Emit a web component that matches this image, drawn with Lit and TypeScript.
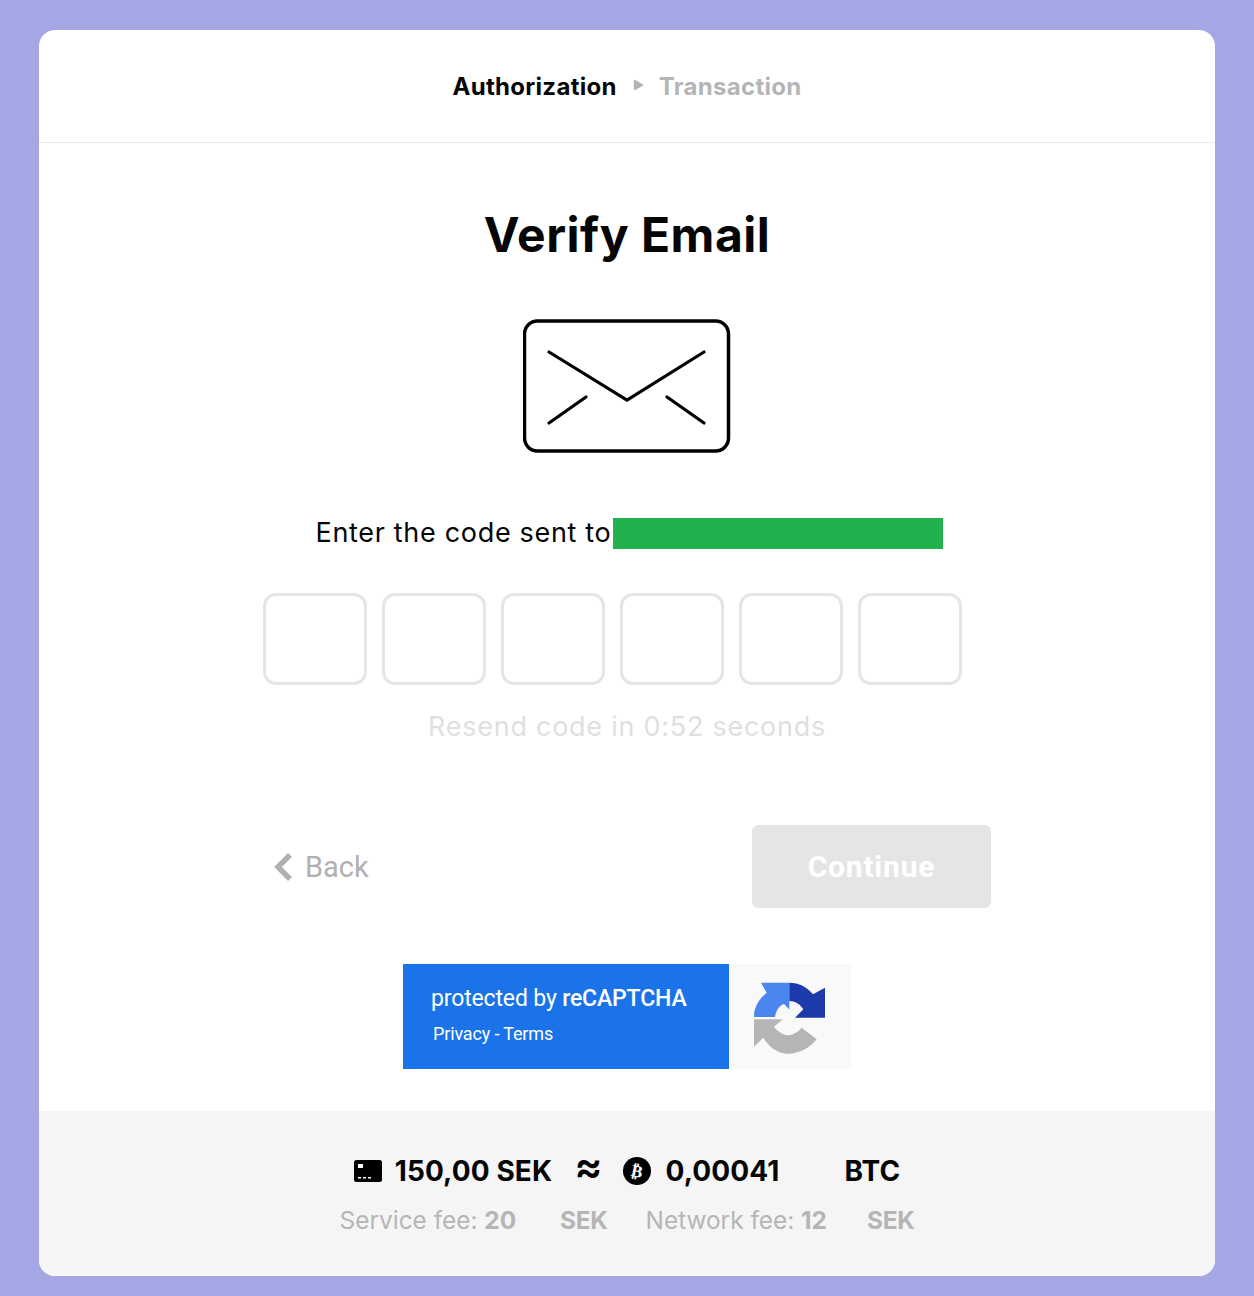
import { LitElement, html, css } from "lit";
import { customElement } from "lit/decorators.js";

@customElement("app-root")
export class AppRoot extends LitElement {
  static styles = css`
    :host { display: block; }
    .page { background: #a5a7e5; padding: 30px 39px 20px; height: 1296px; box-sizing: border-box; font-family: Inter, "Liberation Sans", sans-serif; color: #050505; }
    .card { background: #fff; border-radius: 16px; height: 1246px; display: flex; flex-direction: column; overflow: hidden; }
    .steps { height: 112px; border-bottom: 1px solid #ececec; display: flex; align-items: center; justify-content: center; font-weight: 700; font-size: 24px; letter-spacing: 0.3px; flex: none; }
    .steps .t { color: #b5b5b7; }
    .steps svg { margin: 0 15px 2px 16px; }
    .main { flex: 1; display: flex; flex-direction: column; align-items: center; }
    h1 { margin: 63px 0 0; font-size: 48px; line-height: 58px; font-weight: 700; letter-spacing: 0.5px; }
    .env { margin-top: 55px; display: block; }
    .sent { margin: 65px 0 0 5px; display: flex; align-items: center; height: 31px; font-size: 27px; letter-spacing: 0.68px; }
    .sent span { margin-bottom: 2px; }
    .sent i { display: block; width: 330px; height: 31px; background: #22b14c; margin-left: 2px; }
    .codes { margin: 44px 30px 0 0; display: flex; gap: 15px; }
    .codes div { width: 104px; height: 92px; box-sizing: border-box; border: 3px solid #e5e5e7; border-radius: 13px; }
    .resend { margin-top: 26px; font-size: 27px; line-height: 32px; letter-spacing: 0.74px; color: #dfdfe1; }
    .actions { margin-top: 82px; width: 728px; display: flex; justify-content: space-between; align-items: center; height: 83px; }
    .back { display: flex; align-items: center; gap: 12px; font-family: Roboto, sans-serif; font-size: 29px; color: #b0b0b2; margin-left: 11px; }
    .back svg { display: block; }
    .continue { width: 239px; height: 83px; background: #e5e5e5; border-radius: 6px; color: #fff; font-family: Roboto, sans-serif; font-weight: 700; font-size: 30px; letter-spacing: 0.8px; display: flex; align-items: center; justify-content: center; }
    .rc { margin-top: 56px; width: 448px; height: 105px; display: flex; font-family: Roboto, sans-serif; flex: none; }
    .rc .blue { width: 326px; background: #1a73e8; color: #fff; box-sizing: border-box; padding: 21px 0 0 28px; }
    .rc .l1 { font-size: 23px; line-height: 28px; letter-spacing: -0.15px; }
    .rc .l1 b { font-weight: 500; }
    .rc .l2 { font-size: 18px; line-height: 22px; margin: 10px 0 0 2px; letter-spacing: -0.15px; }
    .rc .logo { flex: 1; background: #f9f9f9; display: flex; align-items: center; justify-content: center; }
    .foot { height: 165px; flex: none; background: #f5f5f5; display: flex; flex-direction: column; align-items: center; }
    .sum { margin-top: 42px; height: 36px; display: flex; align-items: center; font-size: 28px; font-weight: 700; letter-spacing: 0.1px; }
    .sum .card-ic { margin-right: 13px; }
    .sum .x { font-size: 42px; line-height: 36px; margin: -10px 20px 0 22px; font-weight: 600; }
    .sum .v { margin: 0 65px 0 15px; }
    .sum svg { display: block; }
    .fee { margin-top: 16px; display: flex; font-size: 24.4px; line-height: 30px; color: #b5b5b7; }
    .fee b { font-weight: 700; }
    .fee .s { margin-left: 44px; letter-spacing: -0.3px; }
    .fee .n { margin-left: 38px; }
    .fee .m { margin-left: 40px; letter-spacing: -0.3px; }
  `;

  render() {
    return html`<div class="page"><div class="card">
      <div class="steps">
        <span>Authorization</span>
        <svg width="11" height="12" viewBox="0 0 11 12"><path d="M1.5 1.5 L9.5 6 L1.5 10.5 Z" fill="#b5b5b7" stroke="#b5b5b7" stroke-width="1.5" stroke-linejoin="round"/></svg>
        <span class="t">Transaction</span>
      </div>
      <div class="main">
        <h1>Verify Email</h1>
        <svg class="env" width="208" height="134" viewBox="0 0 208 134" fill="none" stroke="#000" stroke-linecap="round" stroke-linejoin="miter">
          <rect x="1.5" y="2" width="204" height="130" rx="13" stroke-width="3.5"/>
          <path d="M26 33 L104 81 L181 33 M26 104 L63 78 M181 104 L144 78" stroke-width="3.2"/>
        </svg>
        <div class="sent"><span>Enter the code sent to</span><i></i></div>
        <div class="codes"><div></div><div></div><div></div><div></div><div></div><div></div></div>
        <div class="resend">Resend code in 0:52 seconds</div>
        <div class="actions">
          <div class="back">
            <svg width="19" height="28" viewBox="0 0 19 28"><path d="M16 2 L4 14 L16 26" fill="none" stroke="#b0b0b2" stroke-width="5.5"/></svg>
            <span>Back</span>
          </div>
          <div class="continue">Continue</div>
        </div>
        <div class="rc">
          <div class="blue">
            <div class="l1">protected by <b>reCAPTCHA</b></div>
            <div class="l2">Privacy - Terms</div>
          </div>
          <div class="logo">
            <svg width="74" height="74" viewBox="0 0 74 74">
              <path d="M1 37 C1 27 6 19 13.7 12.7 L8 2.7 L36.3 2.7 L36.3 29.5 L31 24 C27 25 23 30 22 37 Z" fill="#4a86ee"/>
              <path d="M36.3 2.7 C46 2.7 54 7 60 14.3 L72 7.7 L72 37.7 L42 37.7 L50.3 29.3 C47 24 42 21 36.3 21 Z" fill="#1c3aa9"/>
              <path d="M1 39.3 L29.7 39.3 L21 46.7 C25 52 31 55.3 35.3 55.3 C40 55 45 52 48.7 47.7 L63.7 59.3 C57 68 46 74 34 73.7 C24 73 16 67 10.3 57.7 L1 66.7 Z" fill="#b5b5b5"/>
            </svg>
          </div>
        </div>
      </div>
      <div class="foot">
        <div class="sum">
          <svg class="card-ic" width="28" height="22" viewBox="0 0 28 22"><rect width="28" height="22" rx="2.5" fill="#000"/><path d="M4 4h5v4H4z M4 17h3v1.5H4z M9 17h3v1.5H9z M14 17h3v1.5h-3z" fill="#fff"/></svg>
          <span>150,00 SEK</span>
          <span class="x">≈</span>
          <svg width="28" height="28" viewBox="0 0 28 28"><circle cx="14" cy="14" r="14" fill="#000"/><text x="14" y="20" text-anchor="middle" font-family="DejaVu Sans" font-size="17" font-weight="700" fill="#fff" transform="rotate(12 14 14)">₿</text></svg>
          <span class="v">0,00041</span>
          <span>BTC</span>
        </div>
        <div class="fee">
          <span>Service fee: <b>20</b></span><b class="s">SEK</b><span class="n">Network fee: <b>12</b></span><b class="m">SEK</b>
        </div>
      </div>
    </div></div>`;
  }
}
